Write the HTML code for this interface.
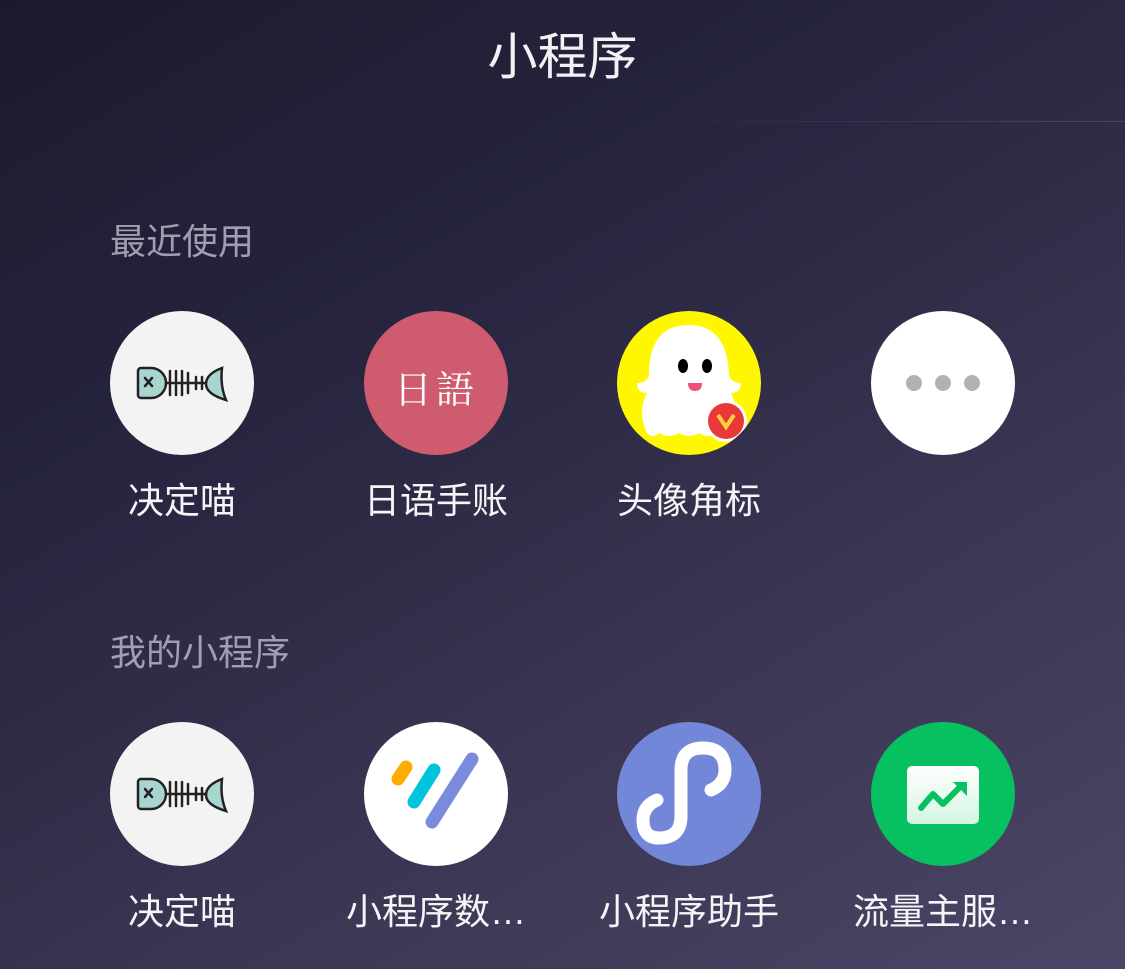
<!DOCTYPE html>
<html><head><meta charset="utf-8"><style>
html,body{margin:0;padding:0}
body{width:1125px;height:969px;overflow:hidden;position:relative;font-family:"Liberation Sans","Noto Sans CJK SC",sans-serif;
background:linear-gradient(150deg,#1b1a2b 0%,#272540 35%,#3a3552 65%,#4c4566 100%);}
.title{position:absolute;top:27px;left:0;width:1125px;text-align:center;color:#f2f2f4;font-size:50px;font-weight:400;line-height:60px}
.line{position:absolute;top:121px;left:600px;width:525px;height:1px;background:linear-gradient(90deg,rgba(255,255,255,0),rgba(255,255,255,0.12))}
.sec{position:absolute;left:110px;color:#a19db2;font-size:36px;line-height:40px}
.c{position:absolute;width:144px;height:144px;border-radius:50%;overflow:hidden}
.c svg{position:absolute;left:0;top:0}
.lb{position:absolute;width:240px;text-align:center;color:#f5f5f7;font-size:36px;line-height:40px}
</style></head><body>
<div class="title">小程序</div>
<div class="line"></div>
<div class="sec" style="top:222px">最近使用</div>
<div class="sec" style="top:633px">我的小程序</div>

<!-- row 1 -->
<div class="c" style="left:110px;top:311px;background:#f3f3f3">
<svg width="144" height="144"><g stroke="#222" stroke-width="2.5" fill="none" stroke-linecap="round">
<path d="M31 57 h10 a15 15 0 0 1 0 30 h-10 a3 3 0 0 1 -3 -3 v-24 a3 3 0 0 1 3 -3z" fill="#a8d5cf"/>
<path d="M35 67 l7 8 M42 67 l-7 8"/>
<path d="M56 72 h42 M60 60 v24 M66 60 v24 M72 60 v24 M78 62 v20 M86 66 v12 M92 66 v12"/>
<path d="M112 57 q-16 6 -16 16 q0 10 20 16 q-6 -14 -4 -32z" fill="#a8d5cf"/></g></svg></div>
<div class="c" style="left:364px;top:311px;background:#cf5c6e">
<div style="position:absolute;left:0;top:48px;width:144px;text-align:center;color:#fff;font-size:38px;font-family:'Noto Serif CJK SC',serif;letter-spacing:4px">日語</div></div>
<div class="c" style="left:617px;top:311px;background:#fff700">
<svg width="144" height="144">
<path d="M30 122 q-10 -20 0 -40 q-10 0 -10 -10 q10 0 12 -8 q0 -50 40 -50 q38 0 40 50 q2 8 12 8 q0 10 -10 10 q10 20 0 40 q-8 6 -16 0 q-8 6 -16 0 q-10 6 -20 0 q-10 6 -20 0 q-6 6 -12 0z" fill="#fff"/>
<ellipse cx="66" cy="55" rx="5" ry="7"/><ellipse cx="90" cy="55" rx="5" ry="7"/>
<path d="M71 72 h14 q0 8 -7 8 q-7 0 -7 -8z" fill="#f0507a"/>
<circle cx="109" cy="110" r="21" fill="#fff"/><circle cx="109" cy="110" r="18" fill="#e8383a"/>
<path d="M101 104 l8 12 l8 -12" stroke="#ffd23a" stroke-width="4" fill="none"/></svg></div>
<div class="c" style="left:871px;top:311px;background:#fff">
<svg width="144" height="144"><circle cx="43" cy="72" r="8" fill="#b2b2b2"/><circle cx="72" cy="72" r="8" fill="#b2b2b2"/><circle cx="101" cy="72" r="8" fill="#b2b2b2"/></svg></div>

<div class="lb" style="left:62px;top:481px">决定喵</div>
<div class="lb" style="left:316px;top:481px">日语手账</div>
<div class="lb" style="left:569px;top:481px">头像角标</div>

<!-- row 2 -->
<div class="c" style="left:110px;top:722px;background:#f3f3f3">
<svg width="144" height="144"><g stroke="#222" stroke-width="2.5" fill="none" stroke-linecap="round">
<path d="M31 57 h10 a15 15 0 0 1 0 30 h-10 a3 3 0 0 1 -3 -3 v-24 a3 3 0 0 1 3 -3z" fill="#a8d5cf"/>
<path d="M35 67 l7 8 M42 67 l-7 8"/>
<path d="M56 72 h42 M60 60 v24 M66 60 v24 M72 60 v24 M78 62 v20 M86 66 v12 M92 66 v12"/>
<path d="M112 57 q-16 6 -16 16 q0 10 20 16 q-6 -14 -4 -32z" fill="#a8d5cf"/></g></svg></div>
<div class="c" style="left:364px;top:722px;background:#fff">
<svg width="144" height="144" stroke-linecap="round" fill="none">
<path d="M34 57 l8 -12" stroke="#ffab00" stroke-width="13"/>
<path d="M50 80 l20 -32" stroke="#00c4dc" stroke-width="13"/>
<path d="M68 100 l40 -63" stroke="#7b8bdc" stroke-width="13"/></svg></div>
<div class="c" style="left:617px;top:722px;background:#7387d9">
<svg width="144" height="144"><path d="M64 48 q0 -22 22 -22 q22 0 22 22 q0 14 -14 20 M64 48 v46 q0 22 -22 22 q-16 0 -16 -18 q0 -14 14 -20" stroke="#fff" stroke-width="13" fill="none" stroke-linecap="round"/></svg></div>
<div class="c" style="left:871px;top:722px;background:#07c160">
<svg width="144" height="144"><defs><linearGradient id="g" x1="0" y1="0" x2="0" y2="1"><stop offset="0" stop-color="#fff"/><stop offset="1" stop-color="#d4f5e2"/></linearGradient></defs>
<rect x="36" y="44" width="72" height="58" rx="5" fill="url(#g)"/>
<path d="M50 86 l12 -14 l10 10 l18 -18" stroke="#07c160" stroke-width="6" fill="none" stroke-linecap="round" stroke-linejoin="round"/>
<path d="M82 60 h14 v14z" fill="#07c160"/></svg></div>

<div class="lb" style="left:62px;top:892px">决定喵</div>
<div class="lb" style="left:316px;top:892px">小程序数…</div>
<div class="lb" style="left:569px;top:892px">小程序助手</div>
<div class="lb" style="left:823px;top:892px">流量主服…</div>
</body></html>
